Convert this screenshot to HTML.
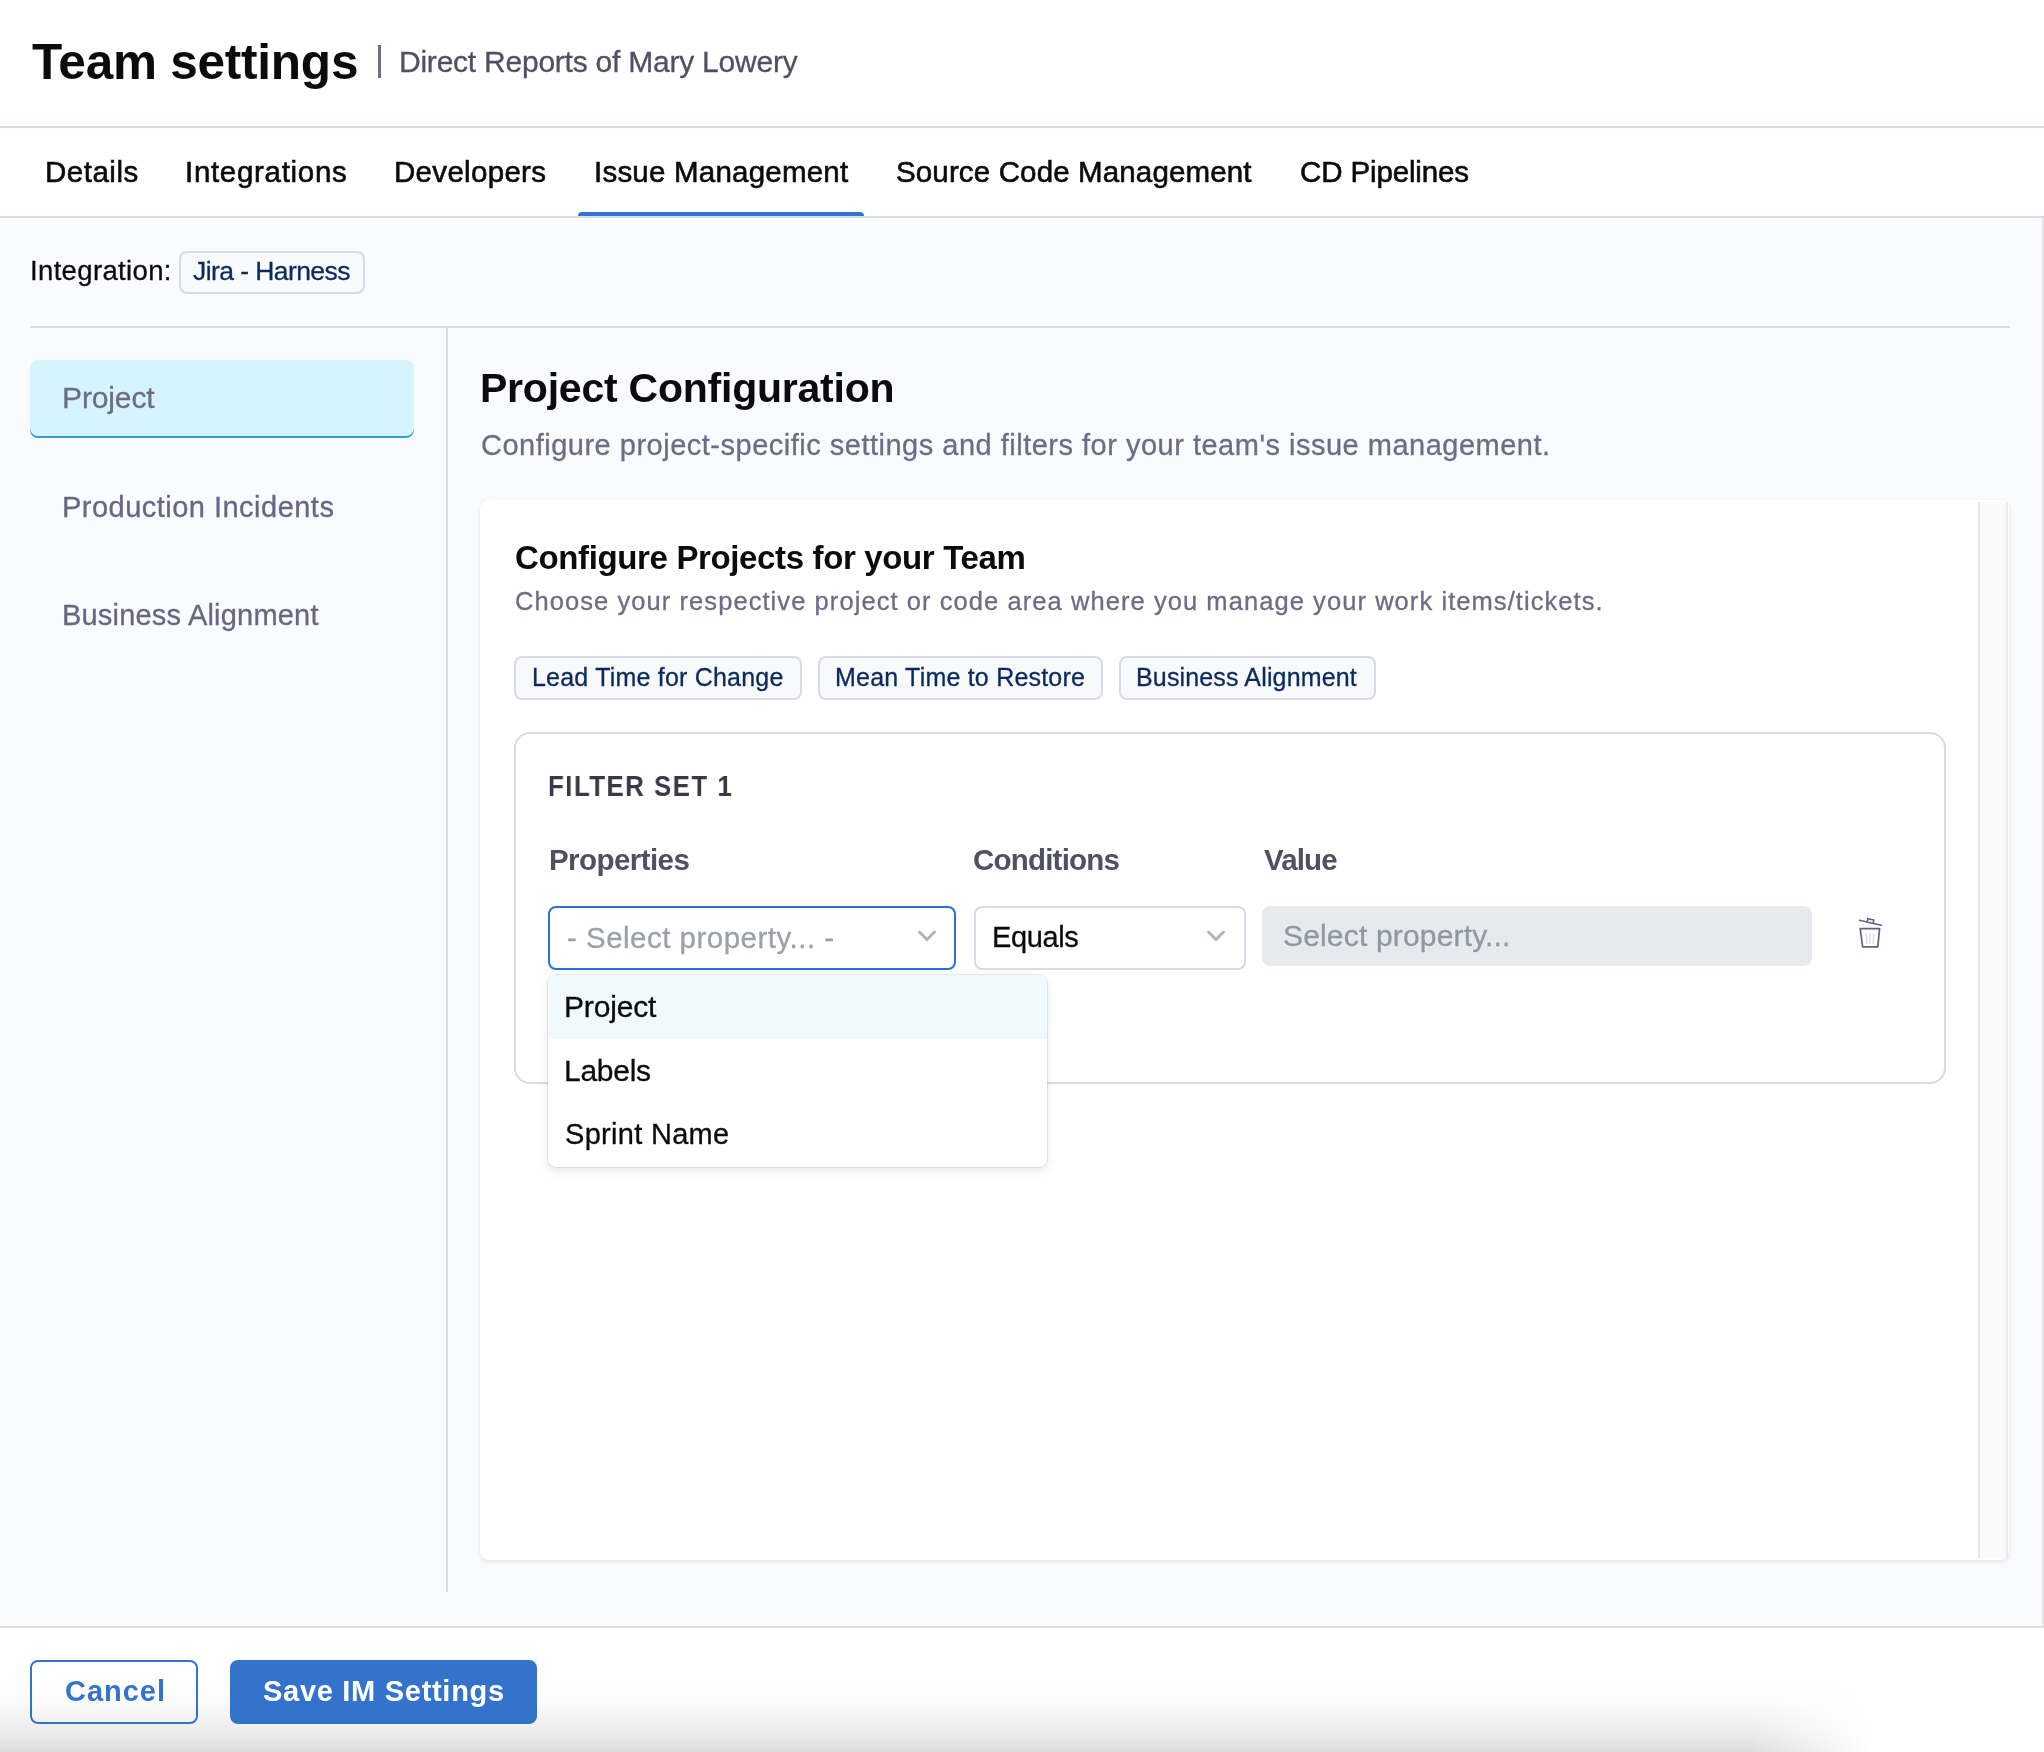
<!DOCTYPE html>
<html><head><meta charset="utf-8"><title>Team settings</title>
<style>
*{box-sizing:border-box;margin:0;padding:0}
html,body{width:2044px;height:1752px;overflow:hidden;background:#fff}
body{position:relative;font-family:"Liberation Sans",sans-serif}
.t{position:absolute;white-space:pre;will-change:transform}
.b{position:absolute}
</style></head>
<body>
<div class="b" style="left:0;top:126px;width:2044px;height:2px;background:#dcdce6"></div>
<div class="b" style="left:378px;top:45px;width:2.5px;height:33px;background:#6e7087"></div>
<div class="b" style="left:0;top:218px;width:2042px;height:1408px;background:#fafbfe"></div>
<div class="b" style="left:0;top:216px;width:2044px;height:2px;background:#dcdce6"></div>
<div class="b" style="left:578px;top:212px;width:286px;height:4.25px;background:#3273d0;border-radius:4px 4px 0 0"></div>
<div class="b" style="left:2042px;top:218px;width:2px;height:1410px;background:#e4e4e6"></div>
<div class="b" style="left:179px;top:251px;width:186px;height:43px;border:2px solid #d9dae5;border-radius:8px;background:#f9fafc"></div>
<div class="b" style="left:30px;top:326px;width:1980px;height:2px;background:#d9dae5"></div>
<div class="b" style="left:446px;top:328px;width:2px;height:1264px;background:#d9dae5"></div>
<div class="b" style="left:30px;top:360px;width:384px;height:78px;background:#d6f4fc;border-radius:8px;box-shadow:inset 0 -2px 0 #3d9ad9"></div>
<div class="b" style="left:480px;top:500px;width:1529px;height:1060px;background:#fff;border-radius:8px;box-shadow:0 0 1px rgba(40,41,61,.06),0 2px 5px rgba(96,97,112,.14)"></div>
<div class="b" style="left:1978px;top:502px;width:30px;height:1056px;background:#fafafa;border-left:2px solid #e8e8e8;border-right:2px solid #ececec"></div>
<div class="b" style="left:514px;top:656px;width:288px;height:44px;border:2px solid #d9dae5;border-radius:8px;background:#f8f9fb"></div>
<div class="b" style="left:818px;top:656px;width:284.5px;height:44px;border:2px solid #d9dae5;border-radius:8px;background:#f8f9fb"></div>
<div class="b" style="left:1119px;top:656px;width:256.5px;height:44px;border:2px solid #d9dae5;border-radius:8px;background:#f8f9fb"></div>
<div class="b" style="left:514px;top:732px;width:1432px;height:352px;border:2px solid #d9dae5;border-radius:16px;background:#fff"></div>
<div class="b" style="left:548px;top:906px;width:408px;height:64px;border:2px solid #2b6fd1;border-radius:8px;background:#fff"></div>
<div class="b" style="left:974px;top:906px;width:272px;height:64px;border:2px solid #d9dae5;border-radius:8px;background:#fff"></div>
<div class="b" style="left:1262px;top:906px;width:550px;height:60px;border-radius:8px;background:#e6eaee"></div>
<svg class="b" style="left:917px;top:928px" width="20" height="16" viewBox="0 0 20 16"><path d="M2.5 4 L10 11.5 L17.5 4" fill="none" stroke="#b0b3c0" stroke-width="3" stroke-linecap="round" stroke-linejoin="round"/></svg>
<svg class="b" style="left:1206px;top:928px" width="20" height="16" viewBox="0 0 20 16"><path d="M2.5 4 L10 11.5 L17.5 4" fill="none" stroke="#b0b3c0" stroke-width="3" stroke-linecap="round" stroke-linejoin="round"/></svg>
<svg class="b" style="left:1854px;top:912px" width="32" height="40" viewBox="0 0 32 40"><path d="M5.5 8.2 L27.2 13.2" stroke="#5f6480" stroke-width="1.6" stroke-linecap="round"/><path d="M13.3 9.7 L13.8 6.6 L19.8 8 L19.2 11" fill="none" stroke="#5f6480" stroke-width="1.6"/><path d="M6.2 16.6 L25.6 16.6 L23.8 34.8 L8.6 34.8 Z" fill="none" stroke="#5f6480" stroke-width="1.7" stroke-linejoin="round"/><path d="M12.4 22 L12.8 31.6 M16 22 L16 31.6 M19.6 22 L19.2 31.6" stroke="#dadbe2" stroke-width="1.3" stroke-linecap="round"/></svg>
<div class="b" style="left:548px;top:975px;width:499px;height:192px;background:#fff;border-radius:8px;box-shadow:0 0 0 1px rgba(0,0,0,.07),0 4px 10px rgba(96,97,112,.16);overflow:hidden"><div style="height:64px;background:#f0f9fc"></div></div>
<div class="b" style="left:0;top:1626px;width:2044px;height:2px;background:#dedede"></div>
<div class="b" style="left:0;top:1676px;width:1920px;height:76px;background:linear-gradient(to bottom,rgba(0,0,0,0) 0%,rgba(0,0,0,.02) 35%,rgba(0,0,0,.065) 70%,rgba(0,0,0,.135) 100%);-webkit-mask-image:linear-gradient(to right,#000 0,#000 1750px,transparent 1870px)"></div>
<div class="b" style="left:30px;top:1660px;width:168px;height:64px;border:2px solid #3473cc;border-radius:8px;background:transparent"></div>
<div class="b" style="left:230px;top:1660px;width:307px;height:64px;border-radius:8px;background:#3473cc"></div>
<div class="t" style="left:32.1px;top:37.0px;font-size:49.5px;line-height:49.5px;font-weight:700;letter-spacing:-0.23px;color:#0b0b0d;">Team settings</div>
<div class="t" style="left:399.25px;top:46.61px;font-size:30.0px;line-height:30.0px;font-weight:400;letter-spacing:-0.23px;color:#4f5162;-webkit-text-stroke:0.3px #4f5162;">Direct Reports of Mary Lowery</div>
<div class="t" style="left:45.0px;top:156.78px;font-size:29.5px;line-height:29.5px;font-weight:400;letter-spacing:0.51px;color:#0b0b0d;-webkit-text-stroke:0.6px #0b0b0d;">Details</div>
<div class="t" style="left:185.0px;top:156.78px;font-size:29.5px;line-height:29.5px;font-weight:400;letter-spacing:0.69px;color:#0b0b0d;-webkit-text-stroke:0.6px #0b0b0d;">Integrations</div>
<div class="t" style="left:394.25px;top:156.78px;font-size:29.5px;line-height:29.5px;font-weight:400;letter-spacing:0.31px;color:#0b0b0d;-webkit-text-stroke:0.6px #0b0b0d;">Developers</div>
<div class="t" style="left:593.5px;top:156.78px;font-size:29.5px;line-height:29.5px;font-weight:400;letter-spacing:0.22px;color:#0b0b0d;-webkit-text-stroke:0.6px #0b0b0d;">Issue Management</div>
<div class="t" style="left:896.0px;top:156.78px;font-size:29.5px;line-height:29.5px;font-weight:400;letter-spacing:0.14px;color:#0b0b0d;-webkit-text-stroke:0.6px #0b0b0d;">Source Code Management</div>
<div class="t" style="left:1300.2px;top:156.78px;font-size:29.5px;line-height:29.5px;font-weight:400;letter-spacing:-0.13px;color:#0b0b0d;-webkit-text-stroke:0.6px #0b0b0d;">CD Pipelines</div>
<div class="t" style="left:29.6px;top:256.72px;font-size:27.5px;line-height:27.5px;font-weight:400;letter-spacing:0.35px;color:#0b0b0d;-webkit-text-stroke:0.3px #0b0b0d;">Integration:</div>
<div class="t" style="left:192.8px;top:257.57px;font-size:26.5px;line-height:26.5px;font-weight:400;letter-spacing:-0.58px;color:#0b2a5e;-webkit-text-stroke:0.3px #0b2a5e;">Jira - Harness</div>
<div class="t" style="left:61.7px;top:382.61px;font-size:30.0px;line-height:30.0px;font-weight:400;letter-spacing:-0.12px;color:#6b6d85;-webkit-text-stroke:0.3px #6b6d85;">Project</div>
<div class="t" style="left:62.1px;top:493.15px;font-size:29.0px;line-height:29.0px;font-weight:400;letter-spacing:0.48px;color:#646883;-webkit-text-stroke:0.3px #646883;">Production Incidents</div>
<div class="t" style="left:62.0px;top:601.25px;font-size:29.0px;line-height:29.0px;font-weight:400;letter-spacing:0.2px;color:#646883;-webkit-text-stroke:0.3px #646883;">Business Alignment</div>
<div class="t" style="left:480.0px;top:367.79px;font-size:41.0px;line-height:41.0px;font-weight:700;letter-spacing:-0.23px;color:#0b0b0d;">Project Configuration</div>
<div class="t" style="left:481.0px;top:431.2px;font-size:29.0px;line-height:29.0px;font-weight:400;letter-spacing:0.5px;color:#6b6d85;-webkit-text-stroke:0.3px #6b6d85;">Configure project-specific settings and filters for your team's issue management.</div>
<div class="t" style="left:514.5px;top:541.32px;font-size:33.0px;line-height:33.0px;font-weight:700;letter-spacing:-0.36px;color:#0b0b0d;">Configure Projects for your Team</div>
<div class="t" style="left:514.5px;top:589.16px;font-size:25.5px;line-height:25.5px;font-weight:400;letter-spacing:1.07px;color:#6b6d85;-webkit-text-stroke:0.3px #6b6d85;">Choose your respective project or code area where you manage your work items/tickets.</div>
<div class="t" style="left:532.0px;top:664.84px;font-size:25.0px;line-height:25.0px;font-weight:400;letter-spacing:0.21px;color:#0b2a5e;-webkit-text-stroke:0.3px #0b2a5e;">Lead Time for Change</div>
<div class="t" style="left:834.7px;top:664.84px;font-size:25.0px;line-height:25.0px;font-weight:400;letter-spacing:0.21px;color:#0b2a5e;-webkit-text-stroke:0.3px #0b2a5e;">Mean Time to Restore</div>
<div class="t" style="left:1135.5px;top:664.84px;font-size:25.0px;line-height:25.0px;font-weight:400;letter-spacing:0.15px;color:#0b2a5e;-webkit-text-stroke:0.3px #0b2a5e;">Business Alignment</div>
<div class="t" style="left:548.28px;top:770.5px;font-size:30.0px;line-height:30.0px;font-weight:700;letter-spacing:1.75px;color:#383946;transform:scaleX(0.86);transform-origin:0 0;">FILTER SET 1</div>
<div class="t" style="left:549.0px;top:845.03px;font-size:29.5px;line-height:29.5px;font-weight:700;letter-spacing:-0.57px;color:#4f5162;">Properties</div>
<div class="t" style="left:973.3px;top:845.03px;font-size:29.5px;line-height:29.5px;font-weight:700;letter-spacing:-0.79px;color:#4f5162;">Conditions</div>
<div class="t" style="left:1263.8px;top:845.03px;font-size:29.5px;line-height:29.5px;font-weight:700;letter-spacing:-0.87px;color:#4f5162;">Value</div>
<div class="t" style="left:567.0px;top:923.03px;font-size:29.5px;line-height:29.5px;font-weight:400;letter-spacing:0.49px;color:#9aa1ac;-webkit-text-stroke:0.3px #9aa1ac;">- Select property... -</div>
<div class="t" style="left:991.5px;top:923.45px;font-size:29.0px;line-height:29.0px;font-weight:400;letter-spacing:-0.39px;color:#0b0b0d;-webkit-text-stroke:0.3px #0b0b0d;">Equals</div>
<div class="t" style="left:1282.75px;top:920.61px;font-size:30.0px;line-height:30.0px;font-weight:400;letter-spacing:0.17px;color:#8d98a4;-webkit-text-stroke:0.3px #8d98a4;">Select property...</div>
<div class="t" style="left:564.4px;top:991.71px;font-size:30.0px;line-height:30.0px;font-weight:400;letter-spacing:-0.17px;color:#0b0b0d;-webkit-text-stroke:0.3px #0b0b0d;">Project</div>
<div class="t" style="left:564.4px;top:1055.81px;font-size:30.0px;line-height:30.0px;font-weight:400;letter-spacing:-0.26px;color:#0b0b0d;-webkit-text-stroke:0.3px #0b0b0d;">Labels</div>
<div class="t" style="left:565.4px;top:1120.25px;font-size:29.0px;line-height:29.0px;font-weight:400;letter-spacing:0.3px;color:#0b0b0d;-webkit-text-stroke:0.3px #0b0b0d;">Sprint Name</div>
<div class="t" style="left:64.7px;top:1677.45px;font-size:29.0px;line-height:29.0px;font-weight:700;letter-spacing:0.99px;color:#3473cc;">Cancel</div>
<div class="t" style="left:263.0px;top:1677.45px;font-size:29.0px;line-height:29.0px;font-weight:700;letter-spacing:0.71px;color:#ffffff;">Save IM Settings</div>
</body></html>
